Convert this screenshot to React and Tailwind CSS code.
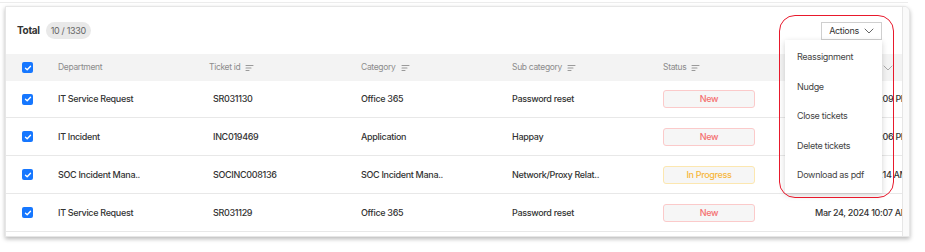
import React from "react";

const font = { fontFamily: "Inter, 'Noto Sans', sans-serif", letterSpacing: "-0.02em" };

function Check() {
  return (
    <span className="flex h-[11px] w-[11px] items-center justify-center rounded-[2px] bg-[#1677ff]">
      <svg width="8" height="8" viewBox="0 0 8 8" fill="none">
        <path d="M1.5 4.2 L3.2 5.8 L6.5 2.3" stroke="white" strokeWidth="1.4" strokeLinecap="round" strokeLinejoin="round" />
      </svg>
    </span>
  );
}

function SortIcon() {
  return (
    <svg width="9" height="8" viewBox="0 0 9 8" className="ml-[5px]" fill="none">
      <path d="M1 1.5 H8 M1 4 H6 M1 6.5 H4" stroke="#9a9a9a" strokeWidth="1.1" strokeLinecap="round" />
    </svg>
  );
}

function Chevron({ color = "#555" }) {
  return (
    <svg width="10" height="6" viewBox="0 0 10 6" fill="none">
      <path d="M1 1 L5 5 L9 1" stroke={color} strokeWidth="1" strokeLinecap="round" strokeLinejoin="round" />
    </svg>
  );
}

function Status({ kind }) {
  if (kind === "prog")
    return (
      <div className="flex h-[18px] w-[92px] items-center justify-center rounded-[3px] border border-[#fce7b0] bg-[#f6f6f6] text-[9px] text-[#f6b73c]">
        In Progress
      </div>
    );
  return (
    <div className="flex h-[18px] w-[92px] items-center justify-center rounded-[3px] border border-[#fbcaca] bg-[#f6f6f6] text-[9px] text-[#f46f6f]">
      New
    </div>
  );
}

const rows = [
  ["IT Service Request", "SR031130", "Office 365", "Password reset", "new", "Mar 24, 2024 10:09 PM", 37],
  ["IT Incident", "INC019469", "Application", "Happay", "new", "Mar 24, 2024 10:06 PM", 38],
  ["SOC Incident Mana..", "SOCINC008136", "SOC Incident Mana..", "Network/Proxy Relat..", "prog", "Mar 24, 2024 10:14 AM", 38],
  ["IT Service Request", "SR031129", "Office 365", "Password reset", "new", "Mar 24, 2024 10:07 AM", 38],
];

const grid = "grid grid-cols-[52px_151px_152px_151px_151px_152px_200px] items-center";

export default function App() {
  return (
    <div className="relative h-[252px] w-[925px] overflow-hidden bg-white" style={font}>
      <div className="h-[3px] w-[908px] border-b border-[#ececec]" />
      <div className="ml-[5px] mt-[3px] flex h-[231px] w-[905px] overflow-hidden rounded-tr-[6px] border border-[#e6e6e6] bg-white shadow-[0_2px_4px_rgba(0,0,0,0.28)]">
        <div className="w-[897px] overflow-hidden">
          <div className="flex h-[47px] items-center justify-between pl-[11px] pr-[20px]">
            <div className="flex items-center">
              <span className="text-[10px] font-bold text-[#333]">Total</span>
              <span className="ml-[6px] flex h-[17px] items-center rounded-full bg-[#e9e9e9] px-[5px] text-[9px] text-[#666]">10 / 1330</span>
            </div>
            <div className="flex h-[18px] w-[61px] items-center justify-center gap-[5px] border border-[#cfcfcf] text-[9px] text-[#333]">
              Actions
              <Chevron color="#666" />
            </div>
          </div>
          <div className={`${grid} h-[27px] w-[1009px] bg-[#f3f3f3] text-[8.5px] text-[#8c8c8c]`}>
            <div className="pl-[16px]"><Check /></div>
            <div>Department</div>
            <div className="flex items-center">Ticket id<SortIcon /></div>
            <div className="flex items-center">Category<SortIcon /></div>
            <div className="flex items-center">Sub category<SortIcon /></div>
            <div className="flex items-center">Status<SortIcon /></div>
            <div className="flex items-center pl-[68px]"><Chevron color="#aaa" /></div>
          </div>
          {rows.map((r, i) => (
            <div
              key={i}
              className={`${grid} w-[1009px] border-b border-[#e8e8e8] text-[9px] font-medium text-[#333]`}
              style={{ height: r[6] }}
            >
              <div className="pl-[16px]"><Check /></div>
              <div>{r[0]}</div>
              <div className="pl-[4px]">{r[1]}</div>
              <div>{r[2]}</div>
              <div>{r[3]}</div>
              <div><Status kind={r[4]} /></div>
              <div className="whitespace-nowrap">{r[5]}</div>
            </div>
          ))}
        </div>
        <div className="w-[7px] border-l border-[#e6e6e6] bg-[#fafafa]" />
      </div>

      <div className="absolute left-[785px] top-[40px] flex h-[153px] w-[97px] flex-col overflow-hidden bg-white pl-[12px] pt-[10px] text-[9px] text-[#444] shadow-[0_2px_6px_rgba(0,0,0,0.18)]">
        <div className="h-[29.5px] shrink-0">Reassignment</div>
        <div className="h-[29.5px] shrink-0">Nudge</div>
        <div className="h-[29.5px] shrink-0">Close tickets</div>
        <div className="h-[29.5px] shrink-0">Delete tickets</div>
        <div className="h-[29.5px] shrink-0">Download as pdf</div>
      </div>

      <div className="pointer-events-none absolute left-[779px] top-[15px] h-[183px] w-[115px] rounded-[16px] border-[1.5px] border-[#e8192c]" />
    </div>
  );
}
